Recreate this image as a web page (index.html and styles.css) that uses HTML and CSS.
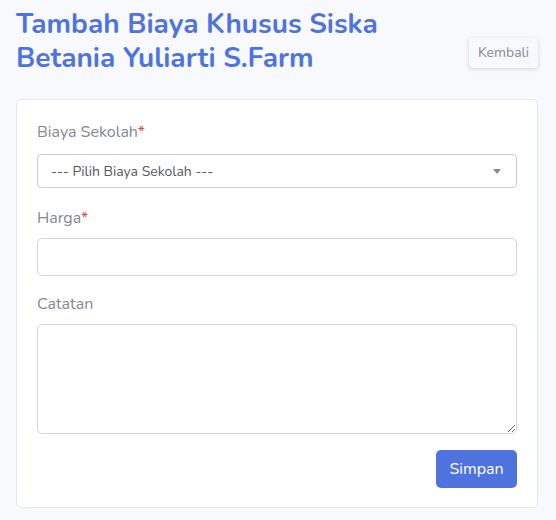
FILE: index.html
```html
<!DOCTYPE html>
<html lang="id">
<head>
<meta charset="utf-8">
<link rel="stylesheet" href="styles.css">
</head>
<body>
<div class="page">
  <div class="header">
    <h3 class="title">Tambah Biaya Khusus Siska<br>Betania Yuliarti S.Farm</h3>
    <a class="btn-back">Kembali</a>
  </div>
  <div class="card">
    <div class="group">
      <label class="label">Biaya Sekolah<span class="req">*</span></label>
      <div class="select-wrap">
        <div class="select">
          <span class="select-text">--- Pilih Biaya Sekolah ---</span>
          <span class="arrow"></span>
        </div>
      </div>
    </div>
    <div class="group">
      <label class="label">Harga<span class="req">*</span></label>
      <input class="input" type="text">
    </div>
    <div class="group">
      <label class="label">Catatan</label>
      <textarea class="textarea"></textarea>
    </div>
    <div class="actions">
      <button class="btn-primary">Simpan</button>
    </div>
  </div>
</div>
</body>
</html>
```
FILE: styles.css
```css
* { box-sizing: border-box; }
html, body { margin: 0; padding: 0; }
body {
  background: #f8f9fc;
  font-family: "Nunito", "Lato", "Noto Sans", sans-serif;
  color: #858796;
  font-size: 16px;
  line-height: 1.5;
}
.page {
  padding: 7px 18px 0 16px;
}
.header {
  display: flex;
  justify-content: space-between;
  align-items: flex-end;
}
.title {
  margin: 0;
  font-size: 28px;
  font-weight: 700;
  line-height: 34px;
  color: #4e73df;
}
.btn-back {
  display: block;
  margin-bottom: 7px;
  width: 69px;
  text-align: center;
  height: 30px;
  line-height: 30px;
  font-size: 14px;
  color: #858796;
  background: #f8f9fc;
  border-radius: 4px;
  box-shadow: 0 1px 4px rgba(58, 59, 69, 0.2);
}
.card {
  margin-top: 24px;
  background: #fff;
  border: 1px solid #e3e6f0;
  border-radius: 5px;
  padding: 20px 20px 19px;
}
.group {
  margin-bottom: 16px;
}
.label {
  display: block;
  margin-bottom: 8px;
  line-height: 24px;
}
.req { color: #e74a3b; }
.select-wrap {
  padding: 2px 0;
}
.select {
  display: flex;
  align-items: center;
  justify-content: space-between;
  height: 34px;
  border: 1px solid #c9cbd4;
  border-radius: 4px;
  padding: 0 12px 0 13px;
}
.select-text {
  font-size: 14px;
  color: #555660;
}
.arrow {
  width: 0;
  height: 0;
  border-left: 4px solid transparent;
  border-right: 4px solid transparent;
  border-top: 5px solid #888;
  margin-right: 3px;
}
.input, .textarea {
  display: block;
  width: 100%;
  border: 1px solid #d1d3e2;
  border-radius: 5px;
  font-family: inherit;
  font-size: 16px;
  padding: 6px 12px;
  background: #fff;
}
.input { height: 38px; }
.textarea { height: 110px; }
.actions {
  display: flex;
  justify-content: flex-end;
}
.btn-primary {
  height: 38px;
  width: 81px;
  border: none;
  border-radius: 5px;
  background: #4e73df;
  color: #fff;
  font-family: inherit;
  font-size: 16px;
}
```
